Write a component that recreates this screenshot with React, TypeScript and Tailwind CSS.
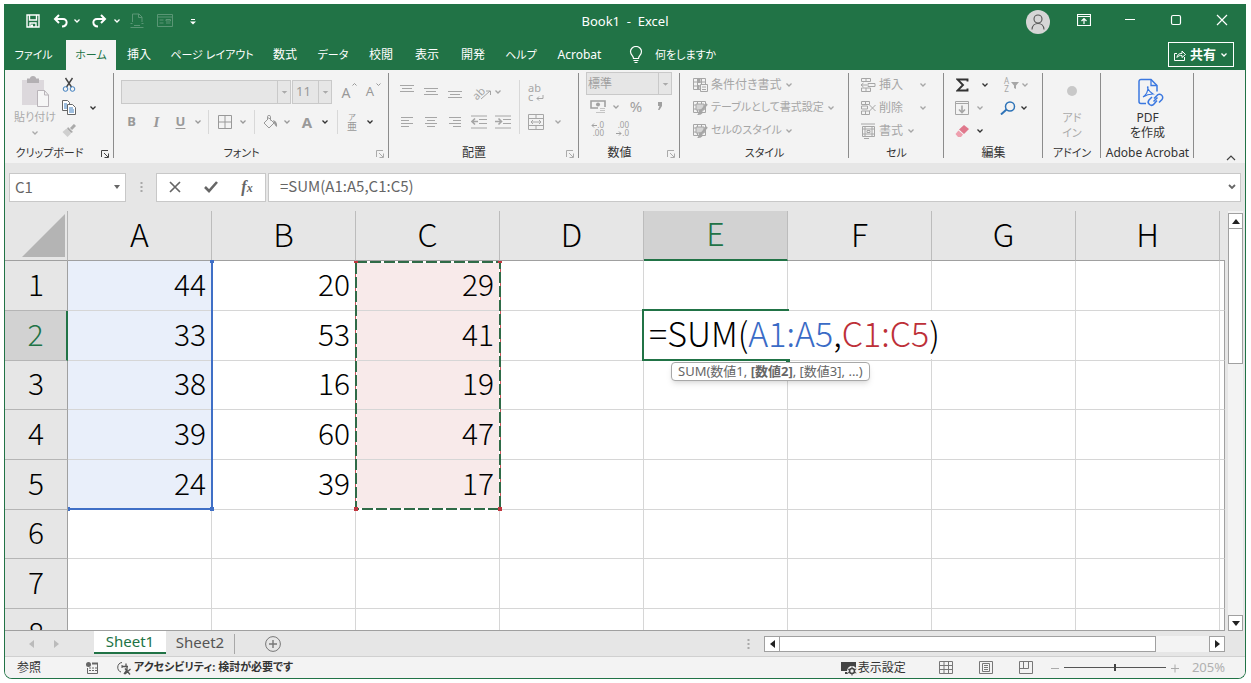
import React from 'react';

interface IconProps {
  w?: number;
  h?: number;
  className?: string;
  children: React.ReactNode;
}

const Icon: React.FC<IconProps> = ({ w = 16, h = 16, className = '', children }) => (
  <svg
    width={w}
    height={h}
    viewBox={`0 0 ${w} ${h}`}
    fill="none"
    stroke="currentColor"
    className={`shrink-0 ${className}`}
    aria-hidden="true"
  >
    {children}
  </svg>
);

const Chevron: React.FC<{ className?: string }> = ({ className = '' }) => (
  <Icon w={8} h={6} className={className}>
    <path d="M1.5 1.5 4 4l2.5-2.5" strokeWidth="1.3" />
  </Icon>
);

interface ToolProps {
  label: string;
  className?: string;
  children: React.ReactNode;
}

const Tool: React.FC<ToolProps> = ({ label, className = '', children }) => (
  <button type="button" aria-label={label} className={`flex shrink-0 items-center justify-center ${className}`}>
    {children}
  </button>
);

const Divider: React.FC<{ className?: string }> = ({ className = 'bg-[#d8d8d8]' }) => (
  <span className={`w-px shrink-0 ${className}`} />
);

interface GroupProps {
  title: string;
  width: string;
  titleSize?: string;
  launcher?: 'dark' | 'light';
  children: React.ReactNode;
}

const Group: React.FC<GroupProps> = ({ title, width, titleSize = 'text-[12px]', launcher, children }) => (
  <section className={`relative flex shrink-0 flex-col ${width}`}>
    <div className="h-[75px]">{children}</div>
    <h2 className={`text-center leading-5 whitespace-nowrap text-[#333] ${titleSize} ${launcher ? 'pr-5' : ''}`}>
      {title}
    </h2>
    {launcher && (
      <button
        type="button"
        aria-label={`${title}の設定`}
        className={`absolute right-1 bottom-1 ${launcher === 'dark' ? 'text-[#444]' : 'text-[#aaa]'}`}
      >
        <Icon w={10} h={10}>
          <path d="M1.5 8V1.5H8M4 4l4 4M8.5 4.5v4h-4" />
        </Icon>
      </button>
    )}
    <span className="absolute top-[3px] right-0 h-[85px] w-px bg-[#8c8c8c]" />
  </section>
);

const TitleBar: React.FC = () => (
  <header className="grid h-[36px] grid-cols-[1fr_auto_1fr] items-center bg-[#217346] text-white">
    <div className="flex items-center pb-[2px] pl-[18px]">
      <Tool label="上書き保存" className="w-5">
        <Icon w={14} h={14}>
          <path d="M1 1h12v12H1zM3.5 1v5h7V1M4 13V9h6v4" strokeWidth="1.4" />
          <path d="M5 10.500h2v2.500H5z" fill="currentColor" stroke="none" />
        </Icon>
      </Tool>
      <Tool label="元に戻す" className="ml-2 w-5">
        <Icon w={16} h={14}>
          <path d="M6 1 2 5l4 4M2.500 5H10c5 0 5 7-1 7.500" strokeWidth="2" />
        </Icon>
      </Tool>
      <Tool label="元に戻す履歴" className="w-3"><Chevron /></Tool>
      <Tool label="やり直し" className="ml-1 w-6">
        <Icon w={16} h={14}>
          <path d="m10 1 4 4-4 4M13.500 5H6C1 5 1 12 7 12.500" strokeWidth="2" />
        </Icon>
      </Tool>
      <Tool label="やり直し履歴" className="w-3"><Chevron /></Tool>
      <Tool label="ドキュメント" className="ml-[2px] w-6 text-[#5a9675]">
        <Icon w={14} h={16}>
          <path d="M2.500 9V1H9l3 3v5M8.500 1v3.500H12M.5 10.500h2M11.500 10.500h2M.5 14.500h13M4 12.500h6" />
        </Icon>
      </Tool>
      <Tool label="フォーム" className="ml-1 w-6 text-[#5a9675]">
        <Icon w={16} h={14}>
          <path d="M.5.5h15v12H.5zM.5 3h15M2.500 6h4M2.500 9h4M9 5.500h4.500v1.500H9zM9 9h4.500" />
        </Icon>
      </Tool>
      <Tool label="クイック アクセス ツール バーのカスタマイズ" className="ml-1 w-6">
        <Icon w={6} h={7}>
          <path d="M1 1.500h4" />
          <path d="M0 3.500h6L3 6.500z" fill="currentColor" stroke="none" />
        </Icon>
      </Tool>
    </div>
    <h1 className="text-[13px] whitespace-pre">Book1  -  Excel</h1>
    <div className="flex items-center justify-end">
      <button
        type="button"
        aria-label="アカウント"
        className="mr-[11px] flex h-6 w-6 items-center justify-center rounded-full bg-[#d6d6d6] text-[#555]"
      >
        <Icon w={16} h={18}>
          <circle cx="8" cy="6" r="4" strokeWidth="1.1" />
          <path d="M2 16.500C2.500 8.500 13.500 8.500 14 16.500" strokeWidth="1.1" />
        </Icon>
      </button>
      <Tool label="リボンの表示オプション" className="w-[46px] pb-1">
        <Icon w={14} h={12}>
          <path d="M.5.5h13v11H.5zM.5 2.500h13M7 10V5M4.500 7 7 4.500 9.500 7" strokeWidth="1.2" />
        </Icon>
      </Tool>
      <Tool label="最小化" className="w-[46px] pb-1">
        <Icon w={12} h={12}><path d="M1 5.500h10" strokeWidth="1.2" /></Icon>
      </Tool>
      <Tool label="最大化" className="w-[46px] pb-1">
        <Icon w={12} h={12}><rect x="1.500" y="1.500" width="9" height="9" rx="1.500" strokeWidth="1.200" /></Icon>
      </Tool>
      <Tool label="閉じる" className="w-[46px] pb-1">
        <Icon w={12} h={12}><path d="m1 1 10 10M11 1 1 11" strokeWidth="1.2" /></Icon>
      </Tool>
    </div>
  </header>
);

const menuTabs = [
  { label: '挿入', style: 'w-[46px] text-[12px]' },
  { label: 'ページ レイアウト', style: 'w-[100px] text-[11px]' },
  { label: '数式', style: 'w-[46px] text-[12px]' },
  { label: 'データ', style: 'w-[50px] text-[11px]' },
  { label: '校閲', style: 'w-[46px] text-[12px]' },
  { label: '表示', style: 'w-[46px] text-[12px]' },
  { label: '開発', style: 'w-[46px] text-[12px]' },
  { label: 'ヘルプ', style: 'w-[50px] text-[11px]' },
  { label: 'Acrobat', style: 'w-[67px] text-[12px]' },
];

const MenuTabs: React.FC = () => (
  <nav className="flex h-[30px] items-stretch bg-[#217346] text-[11px] whitespace-nowrap text-white">
    <button type="button" className="w-[61px] pr-1">ファイル</button>
    <button type="button" className="w-[50px] bg-[#f3f3f3] text-[#217346]">ホーム</button>
    {menuTabs.map(({ label, style }) => (
      <button key={label} type="button" className={style}>{label}</button>
    ))}
    <button type="button" className="ml-4 flex items-center gap-3">
      <Icon w={14} h={18}>
        <path d="M4.500 12.500c0-3-3-3.500-3-7a5.500 5 0 0 1 11 0c0 3.500-3 4-3 7zM4.500 14.500h5M5.500 16.500h3" strokeWidth="1.2" />
      </Icon>
      何をしますか
    </button>
    <button
      type="button"
      className="mt-[2px] mr-[11px] mb-[3px] ml-auto flex w-[66px] items-center justify-center gap-1 border border-white text-[13px] font-bold"
    >
      <Icon w={12} h={12}>
        <path d="M3 4.500H.5v7h10V8M3 8.500c0-3 2-4 5-4V2l3.500 3.500L8 8.500V6.500c-2 0-4 0-5 2z" />
      </Icon>
      共有
      <Chevron />
    </button>
  </nav>
);

const ClipboardGroup: React.FC = () => (
  <Group title="クリップボード" titleSize="text-[11px]" width="w-[109px]" launcher="dark">
    <div className="flex pl-2">
      <button type="button" className="flex w-[44px] flex-col items-center pt-[6px] text-[11px] whitespace-nowrap text-[#aaa]">
        <Icon w={30} h={32}>
          <path d="M2 4h22v25H2z" fill="#dcd8dc" stroke="none" />
          <path d="M7 2.500h3a3 2.500 0 0 1 6 0h3V7H7z" fill="#b3b0b3" stroke="none" />
          <path d="M17.500 14.500h7l4 4.500v11.500h-11zM24.500 14.500V19h4" fill="#f6f6f6" stroke="#b9b4b9" />
        </Icon>
        <span className="leading-[18px]">貼り付け</span>
        <Chevron className="mt-1" />
      </button>
      <div className="flex flex-col pt-[3px] pl-[2px]">
        <Tool label="切り取り" className="h-[23px] w-5 text-[#444]">
          <Icon w={14} h={16}>
            <path d="m3.500 1 6 9M10.500 1l-6 9" strokeWidth="1.400" />
            <circle cx="3.500" cy="12" r="2.300" stroke="#3f7fbf" />
            <circle cx="10.500" cy="12" r="2.300" stroke="#3f7fbf" />
          </Icon>
        </Tool>
        <div className="flex h-[23px]">
          <Tool label="コピー" className="w-5 text-[#666]">
            <Icon w={14} h={15}>
              <path d="M.5.5h5l2 2v8h-7z" fill="#fff" />
              <path d="M2 4h3M2 6h3M2 8h3" stroke="#3f7fbf" />
              <path d="M5.500 4.500h5l3 3v7h-8z" fill="#fff" />
              <path d="M7 8h4M7 10h5M7 12h5" stroke="#3f7fbf" />
            </Icon>
          </Tool>
          <Tool label="コピーのオプション" className="ml-[6px] w-4 text-[#333]"><Chevron /></Tool>
        </div>
        <Tool label="書式のコピー/貼り付け" className="h-[23px] w-5 text-[#aaa]">
          <Icon w={14} h={13}>
            <path d="m13 1-4 4" strokeWidth="3" />
            <path d="m6 3 5 5-2 1-4-4z" fill="currentColor" stroke="none" />
            <path d="m4.500 4.500 4.500 5L5.500 13 .5 8z" fill="#cfcfcf" stroke="none" />
          </Icon>
        </Tool>
      </div>
    </div>
  </Group>
);

const FontGroup: React.FC = () => (
  <Group title="フォント" titleSize="text-[11px]" width="w-[275px]" launcher="light">
    <div className="flex pt-[10px] pl-[7px] text-[#999]">
      <div className="relative">
        <select aria-label="フォント名" className="block h-6 w-[170px] appearance-none border border-[#c9c9c9] bg-[#e6e6e6]" />
        <Icon w={14} h={22} className="pointer-events-none absolute top-px right-0 border-l border-[#c9c9c9]">
          <path d="M4 10h6l-3 3z" fill="#aaa" stroke="none" />
        </Icon>
      </div>
      <div className="relative ml-px">
        <select aria-label="フォント サイズ" className="block h-6 w-10 appearance-none border border-[#c9c9c9] bg-[#e6e6e6] pl-[3px] text-[13px]">
          <option>11</option>
        </select>
        <Icon w={14} h={22} className="pointer-events-none absolute top-px right-0 border-l border-[#c9c9c9]">
          <path d="M4 10h6l-3 3z" fill="#aaa" stroke="none" />
        </Icon>
      </div>
      <button type="button" aria-label="フォント サイズの拡大" className="relative ml-[2px] w-6 text-[14px]">
        A
        <Icon w={5} h={3} className="absolute top-[3px] right-px"><path d="m.5 2.500 2-2 2 2" /></Icon>
      </button>
      <button type="button" aria-label="フォント サイズの縮小" className="relative w-6 text-[13px]">
        A
        <Icon w={5} h={3} className="absolute top-[3px] right-px"><path d="m.5.5 2 2 2-2" /></Icon>
      </button>
    </div>
    <div className="mt-[6px] flex h-6 items-center pl-[5px] text-[13px] text-[#999]">
      <button type="button" className="w-[25px] font-bold">B</button>
      <button type="button" className="w-[25px] font-['Liberation_Serif',serif] text-[15px] font-bold italic">I</button>
      <button type="button" className="w-[23px] font-bold underline underline-offset-2">U</button>
      <Tool label="下線の種類" className="w-3"><Chevron /></Tool>
      <Divider className="mx-1 h-6 bg-[#d8d8d8]" />
      <Tool label="罫線" className="w-6">
        <Icon w={14} h={14}><path d="M.5.5h13v13H.5zM7 .5v13M.5 7h13" /></Icon>
      </Tool>
      <Tool label="罫線の種類" className="w-3"><Chevron /></Tool>
      <Divider className="mx-[5px] h-6 bg-[#d8d8d8]" />
      <Tool label="塗りつぶしの色" className="w-5">
        <Icon w={15} h={14}>
          <path d="M5.500 3.500 1 8l5 5 5-5-5.500-5.500M4.500 5V1.500a1.500 1 0 0 1 3 0v4" />
          <path d="M10 5c3 1 4.500 3 4 7-1.500-1-2.500-2-3-4z" fill="currentColor" stroke="none" />
        </Icon>
      </Tool>
      <Tool label="塗りつぶしの色の選択" className="w-[14px]"><Chevron /></Tool>
      <button type="button" className="ml-[3px] w-5 text-[15px] font-bold">A</button>
      <Tool label="フォントの色の選択" className="w-4 text-[#333]"><Chevron /></Tool>
      <Divider className="mr-[2px] ml-1 h-6 bg-[#d8d8d8]" />
      <button type="button" aria-label="ふりがな" className="flex w-6 flex-col items-center">
        <span className="text-[8px] leading-[8px]">ア</span>
        <span className="text-[10px] leading-[10px]">亜</span>
      </button>
      <Tool label="ふりがなの設定" className="w-3 text-[#333]"><Chevron /></Tool>
    </div>
  </Group>
);

const AlignmentGroup: React.FC = () => (
  <Group title="配置" width="w-[190px]" launcher="light">
    <div className="flex pt-[10px] pl-[6px] text-[#a6a6a6]">
      <div className="flex w-[122px] flex-col gap-[6px]">
        <div className="flex h-6">
          <Tool label="上揃え" className="w-6">
            <Icon w={14} h={20}><path d="M0 3.500h14M2 6.500h10M0 9.500h14" /></Icon>
          </Tool>
          <Tool label="上下中央揃え" className="w-6">
            <Icon w={14} h={20}><path d="M0 6.500h14M2 9.500h10M0 12.500h14" /></Icon>
          </Tool>
          <Tool label="下揃え" className="w-6">
            <Icon w={14} h={20}><path d="M0 9.500h14M2 12.500h10M0 15.500h14" /></Icon>
          </Tool>
          <button type="button" aria-label="方向" className="relative ml-px w-6 text-[11px]">
            <span className="block -rotate-45 pr-1 leading-[22px]">ab</span>
            <Icon w={12} h={12} className="absolute right-0 bottom-1"><path d="m1 11 9-8M6 3h4.500v4" /></Icon>
          </button>
          <Tool label="方向の選択" className="w-3"><Chevron /></Tool>
        </div>
        <div className="flex h-6">
          <Tool label="左揃え" className="w-6">
            <Icon w={12} h={12}><path d="M0 1.500h12M0 4.500h8M0 7.500h12M0 10.500h8" /></Icon>
          </Tool>
          <Tool label="中央揃え" className="w-6">
            <Icon w={12} h={12}><path d="M0 1.500h12M2 4.500h8M0 7.500h12M2 10.500h8" /></Icon>
          </Tool>
          <Tool label="右揃え" className="w-6">
            <Icon w={12} h={12}><path d="M0 1.500h12M4 4.500h8M0 7.500h12M4 10.500h8" /></Icon>
          </Tool>
          <Tool label="インデントを減らす" className="w-6">
            <Icon w={16} h={14}>
              <path d="M0 1h16M8 4.500h8M8 8.500h8M0 13h16" />
              <path d="M1.500 6.500H7M4 3.500l-3 3 3 3" strokeWidth="1.600" />
            </Icon>
          </Tool>
          <Tool label="インデントを増やす" className="w-6">
            <Icon w={16} h={14}>
              <path d="M0 1h16M8 4.500h8M8 8.500h8M0 13h16" />
              <path d="M0 6.500h6M3.500 3.500l3 3-3 3" strokeWidth="1.600" />
            </Icon>
          </Tool>
        </div>
      </div>
      <Divider className="ml-[2px] h-[54px] bg-[#d8d8d8]" />
      <div className="flex flex-col gap-[6px] pl-1">
        <button type="button" aria-label="折り返して全体を表示する" className="relative h-6 w-6 text-left text-[11px] leading-[9px]">
          <span className="block pl-1">ab</span>
          <span className="block pl-1">c</span>
          <Icon w={8} h={6} className="absolute right-1 bottom-[3px]"><path d="M7 0v3.500H1M3 1.500l-2 2 2 2" /></Icon>
        </button>
        <div className="flex h-6">
          <Tool label="セルを結合して中央揃え" className="w-6">
            <Icon w={16} h={16}>
              <path d="M.5.5h15v15H.5zM.5 4.500h15M.5 11.500h15M8 .5v4M8 11.500v4M3 8h10M5 6 3 8l2 2M11 6l2 2-2 2" />
            </Icon>
          </Tool>
          <Tool label="結合の選択" className="ml-[2px] w-4"><Chevron /></Tool>
        </div>
      </div>
    </div>
  </Group>
);

const NumberGroup: React.FC = () => (
  <Group title="数値" width="w-[101px]" launcher="light">
    <div className="flex flex-col pt-[2px] pl-[7px] text-[#a0a0a0]">
      <div className="relative w-[86px]">
        <select aria-label="数値の書式" className="block h-[23px] w-full appearance-none border border-[#c9c9c9] bg-[#e6e6e6] pl-[1px] text-[12px]">
          <option>標準</option>
        </select>
        <Icon w={14} h={21} className="pointer-events-none absolute top-px right-0 border-l border-[#c9c9c9]">
          <path d="M4 10h6l-3 3z" fill="#aaa" stroke="none" />
        </Icon>
      </div>
      <div className="flex h-[23px] items-center">
        <Tool label="通貨表示形式" className="w-6">
          <Icon w={16} h={14}>
            <path d="M1 1h14v7H1z" strokeWidth="1.600" />
            <circle cx="8" cy="4.500" r="2" fill="currentColor" stroke="none" />
            <path d="M8 7h8v7H8z" fill="#f3f3f3" stroke="none" />
            <path d="M10 8.500h5M10 10.500h5M6 12.500h9" stroke="#c4c4c4" />
          </Icon>
        </Tool>
        <Tool label="通貨の選択" className="w-3"><Chevron /></Tool>
        <button type="button" className="ml-[2px] w-6 text-[15px]">%</button>
        <Tool label="桁区切りスタイル" className="w-6">
          <Icon w={6} h={9}><path d="M1 0h4v4L2.500 8H1l1.500-4H1z" fill="currentColor" stroke="none" /></Icon>
        </Tool>
      </div>
      <div className="flex h-[22px] items-center text-[8px] leading-[8px]">
        <button type="button" aria-label="小数点以下の表示桁数を増やす" className="flex w-6 flex-col items-end pr-[6px]">
          <span className="flex items-center">
            <Icon w={6} h={5}><path d="M6 2.500H1M3 .5l-2 2 2 2" /></Icon>.0
          </span>
          <span>.00</span>
        </button>
        <button type="button" aria-label="小数点以下の表示桁数を減らす" className="flex w-6 flex-col items-end pr-[5px]">
          <span>.00</span>
          <span className="flex items-center">
            <Icon w={6} h={5}><path d="M0 2.500h5M3 .5l2 2-2 2" /></Icon>.0
          </span>
        </button>
      </div>
    </div>
  </Group>
);

const TableIcon: React.FC<{ kind: string }> = ({ kind }) => (
  <Icon w={16} h={16}>
    <path d="M1.500 1.500h12v11h-12zM1.500 5h12M1.500 9h12M5.500 1.500v11M9.500 1.500v11" />
    {kind === 'rule' ? (
      <>
        <path d="M5.500 1.500h3V6h-3zM5.500 8h2v4h-2z" fill="currentColor" stroke="none" />
        <path d="M8.500 7.500h7v7h-7zM10 10h4M10 12.500h4" fill="#f3f3f3" />
      </>
    ) : (
      <>
        <path d="M4 4h8v6H4z" fill="#d4d4d4" />
        <path d="m15 4-6 7" strokeWidth="2" />
        <path d="m8 9 3 3c-1 3-4 3-6 3 2-1 1-4 3-6z" fill="currentColor" stroke="none" />
      </>
    )}
  </Icon>
);

const styleItems = [
  { label: '条件付き書式', kind: 'rule', size: 'text-[12px]' },
  { label: 'テーブルとして書式設定', kind: 'table', size: 'text-[11px]' },
  { label: 'セルのスタイル', kind: 'style', size: 'text-[11px]' },
];

const StyleGroup: React.FC = () => (
  <Group title="スタイル" titleSize="text-[11px]" width="w-[169px]">
    <div className="flex flex-col pt-[3px] pl-3 whitespace-nowrap text-[#a6a6a6]">
      {styleItems.map(({ label, kind, size }) => (
        <button key={label} type="button" className={`flex h-[23px] items-center gap-[3px] ${size}`}>
          <TableIcon kind={kind} />
          {label}
          <Chevron />
        </button>
      ))}
    </div>
  </Group>
);

const cellItems = [
  { label: '挿入', gap: 'ml-4', d: 'M1.500 1.500h9v3h-9zM6 1.500v3M1.500 11h9v3.500h-9zM6 11v3.500M8 6.500h7v3H8zM7 8H1M3.500 6 1 8l2.500 2' },
  { label: '削除', gap: 'ml-4', d: 'M1.500 1.500h8v3h-8zM5.500 1.500v3M1.500 6h6v3h-6zM1.500 11h8v3.500h-8zM5.500 11v3.500M9.500 5l6 6M15.500 5l-6 6' },
  { label: '書式', gap: 'ml-1', d: 'M1 1h14M2.500 3.500h12v10h-12zM5 3.500v10M12 3.500v10M2.500 6h12M2.500 11h12M7 7.500h3v2H7zM4 15.500h5' },
];

const CellGroup: React.FC = () => (
  <Group title="セル" titleSize="text-[11px]" width="w-[95px]">
    <div className="flex flex-col pt-[3px] pl-[11px] text-[12px] whitespace-nowrap text-[#a6a6a6]">
      {cellItems.map(({ label, gap, d }) => (
        <button key={label} type="button" className="flex h-[23px] items-center">
          <Icon w={16} h={16}><path d={d} /></Icon>
          <span className="ml-[3px]">{label}</span>
          <Chevron className={gap} />
        </button>
      ))}
    </div>
  </Group>
);

const EditGroup: React.FC = () => (
  <Group title="編集" width="w-[99px]">
    <div className="flex flex-col pt-[3px] pl-[6px] text-[#333]">
      <div className="flex h-[23px] items-center">
        <Tool label="オート SUM" className="w-6">
          <Icon w={13} h={14}><path d="M11.500 3.500V1.500H1.500L7 7l-5.500 5.500h10v-2" strokeWidth="1.900" /></Icon>
        </Tool>
        <Tool label="集計の選択" className="ml-[5px] w-3"><Chevron /></Tool>
        <button type="button" aria-label="並べ替えとフィルター" className="ml-[9px] flex w-7 items-center gap-[2px] pl-1 text-[#a6a6a6]">
          <span className="text-[8px] leading-[8px]">A<br />Z</span>
          <Icon w={8} h={8}><path d="M0 1h8L5 4.500V8L3 7V4.500z" fill="currentColor" stroke="none" /></Icon>
          <Chevron />
        </button>
      </div>
      <div className="flex h-[23px] items-center">
        <Tool label="フィル" className="w-6 text-[#a6a6a6]">
          <Icon w={14} h={14}>
            <path d="M.5.5h13v13H.5zM.5 2.500h13" />
            <path d="M7 4.500v7M4 8.500l3 3 3-3" strokeWidth="1.600" />
          </Icon>
        </Tool>
        <Tool label="フィルの選択" className="w-3 text-[#a6a6a6]"><Chevron /></Tool>
        <Tool label="検索と選択" className="ml-[10px] w-6 text-[#2f74b8]">
          <Icon w={16} h={14}>
            <circle cx="10" cy="5.500" r="4.500" strokeWidth="1.500" />
            <path d="m6.500 8.500-5.500 5" strokeWidth="2" />
          </Icon>
        </Tool>
        <Tool label="検索の選択" className="w-2"><Chevron /></Tool>
      </div>
      <div className="flex h-[23px] items-center">
        <Tool label="クリア" className="w-6">
          <Icon w={14} h={12}>
            <path d="m9 0 5 4-5 5-5-4.500z" fill="#e0788c" stroke="none" />
            <path d="m3.500 5.500 4.500 4L6 12H3L.5 9z" fill="#ee9fae" stroke="none" />
          </Icon>
        </Tool>
        <Tool label="クリアの選択" className="w-3"><Chevron /></Tool>
      </div>
    </div>
  </Group>
);

const Ribbon: React.FC = () => (
  <div className="flex h-[93px] overflow-hidden bg-[#f3f3f3]">
    <ClipboardGroup />
    <FontGroup />
    <AlignmentGroup />
    <NumberGroup />
    <StyleGroup />
    <CellGroup />
    <EditGroup />
    <Group title="アドイン" titleSize="text-[11px]" width="w-[58px]">
      <button type="button" className="flex w-full flex-col items-center pt-4 text-[11px] leading-[15px] text-[#aaa]">
        <span className="mb-[14px] h-[10px] w-[10px] rounded-full bg-[#c8c8c8]" />
        アド<br />イン
      </button>
    </Group>
    <Group title="Adobe Acrobat" width="w-[93px]">
      <button type="button" className="flex w-full flex-col items-center pt-2 text-[12px] leading-[15px] text-[#333]">
        <Icon w={26} h={30} className="mb-[2px] ml-[6px] text-[#3b78e0]">
          <path d="M8 25.500H3a2 2 0 0 1-2-2V3.500a2 2 0 0 1 2-2h10l6 6v6" strokeWidth="1.500" />
          <path d="M13 1.500v6h6" strokeWidth="1.300" />
          <path d="M5 19c3-2 5-6 5-10-1-1-1 3 5 7-3 0-7 1-10 3z" strokeWidth="1.200" />
          <path d="M16 20.500l3-3a3 3 0 0 1 5 4l-3 3M19 22.500l-3 3.500a3 3 0 0 1-5-4l3-3M15.500 23.500l4-4" strokeWidth="1.500" />
        </Icon>
        <span>PDF</span>
        <span>を作成</span>
      </button>
    </Group>
    <Tool label="リボンを折りたたむ" className="mt-auto mr-[9px] ml-auto h-3 text-[#444]">
      <Icon w={10} h={7}><path d="m1 6 4-4 4 4" strokeWidth="1.200" /></Icon>
    </Tool>
  </div>
);

const FormulaBar: React.FC = () => (
  <div className="flex h-12 items-center bg-[#e6e6e6] px-1 text-[#666]">
    <div className="flex h-[29px] w-[117px] items-center border border-[#c8c8c8] bg-white pl-[5px]">
      <input
        aria-label="名前ボックス"
        defaultValue="C1"
        className="min-w-0 flex-1 font-['Noto_Sans_CJK_JP',sans-serif] text-[15px] leading-5 outline-none"
      />
      <Tool label="名前の一覧" className="w-4">
        <Icon w={6} h={4}><path d="M0 0h6L3 4z" fill="currentColor" stroke="none" /></Icon>
      </Tool>
    </div>
    <Icon w={3} h={12} className="mx-[14px]">
      <path d="M1.500 1v2M1.500 5v2M1.500 9v2" strokeWidth="2" stroke="#a8a8a8" />
    </Icon>
    <div className="-ml-px flex h-[29px] w-[110px] items-center justify-around border border-[#c8c8c8] bg-white">
      <Tool label="キャンセル" className="w-8">
        <Icon w={12} h={12}><path d="m1 1 10 10M11 1 1 11" strokeWidth="1.700" /></Icon>
      </Tool>
      <Tool label="入力" className="w-8">
        <Icon w={14} h={12}><path d="m1 6 4 4 8-9" strokeWidth="2.600" /></Icon>
      </Tool>
      <button type="button" aria-label="関数の挿入" className="w-8 font-['Liberation_Serif',serif] text-[16px] font-bold italic">
        f<span className="text-[12px]">x</span>
      </button>
    </div>
    <div className="ml-[2px] flex h-[29px] min-w-0 flex-1 items-center border border-[#c8c8c8] bg-white pl-[11px]">
      <input
        aria-label="数式バー"
        defaultValue="=SUM(A1:A5,C1:C5)"
        className="min-w-0 flex-1 pb-[3px] font-['Noto_Sans_CJK_JP',sans-serif] text-[15px] leading-5 outline-none"
      />
      <Tool label="数式バーの展開" className="w-4">
        <Icon w={8} h={6}><path d="m1 1 3 3 3-3" strokeWidth="1.800" /></Icon>
      </Tool>
    </div>
  </div>
);

const columns = ['A', 'B', 'C', 'D', 'E', 'F', 'G', 'H'];
const rows: (number | null)[][] = [
  [44, 20, 29],
  [33, 53, 41],
  [38, 16, 19],
  [39, 60, 47],
  [24, 39, 17],
  [],
  [],
  [],
];

const cellFill = (column: string, row: number) => {
  if (row > 5) return 'bg-white';
  if (column === 'A') return 'bg-[#e9effa]';
  if (column === 'C') return 'bg-[#f8eaea]';
  return 'bg-white';
};

const EditingCell: React.FC = () => (
  <>
    <span className="absolute -top-[2px] -left-[2px] h-[52px] w-[147px] border-2 border-r-0 border-[#217346]" />
    <span className="absolute top-0 left-0 z-10 h-[48px] bg-white pl-[5px] text-[34px] leading-[43px] whitespace-nowrap">
      =SUM(<span className="text-[#3a6bc6]">A1:A5</span>,<span className="text-[#bd3038]">C1:C5</span>)
    </span>
    <span className="absolute top-[48px] left-[142px] z-10 h-1 w-1 bg-[#217346]" />
    <span className="absolute top-[51px] left-[27px] z-10 rounded-[4px] border border-[#a8a8a8] bg-white px-[6px] font-['Noto_Sans','Noto_Sans_CJK_JP',sans-serif] text-[13px] leading-[17px] font-normal whitespace-nowrap text-[#666] shadow-md">
      SUM(数値1, <b>[数値2]</b>, [数値3], ...)
    </span>
  </>
);

const Sheet: React.FC = () => (
  <div className="flex min-h-0 flex-1 bg-[#e6e6e6]">
    <div className="relative min-w-0 flex-1 overflow-hidden border-b border-[#a0a0a0] font-['Noto_Sans_CJK_JP',sans-serif] font-light text-black">
      <table className="w-full table-fixed border-separate border-spacing-0">
        <colgroup>
          <col className="w-[63px]" />
          {columns.map((column) => <col key={column} className="w-[144px]" />)}
          <col />
        </colgroup>
        <thead>
          <tr className="h-[50px] text-[32px] leading-[42px]">
            <th className="border-r border-b border-r-[#b5b5b5] border-b-[#a0a0a0] p-0">
              <button type="button" aria-label="すべて選択" className="ml-auto block pr-[2px]">
                <Icon w={43} h={43}><path d="M43 0v43H0z" fill="#b4b4b4" stroke="none" /></Icon>
              </button>
            </th>
            {columns.map((column) => (
              <th
                key={column}
                scope="col"
                className={`border-r border-r-[#bcbcbc] px-0 pt-0 pb-[6px] font-light ${
                  column === 'E'
                    ? 'border-b-2 border-b-[#217346] bg-[#d2d2d2] text-[#217346]'
                    : 'border-b border-b-[#a0a0a0]'
                }`}
              >
                {column}
              </th>
            ))}
            <th className="border-b border-[#a0a0a0] p-0" />
          </tr>
        </thead>
        <tbody className="text-[30px] leading-[42px]">
          {rows.map((values, index) => (
            <tr key={index} className="h-[50px] nth-[3n]:h-[49px]">
              <th
                scope="row"
                className={`border-r border-b border-b-[#b5b5b5] px-0 pt-0 pb-[6px] font-light ${
                  index === 1 ? 'border-r-2 border-r-[#217346] bg-[#d2d2d2] text-[#217346]' : 'border-r-[#a0a0a0]'
                }`}
              >
                {index + 1}
              </th>
              {columns.map((column, c) => (
                <td
                  key={column}
                  className={`relative border-r border-b border-[#d6d6d6] pt-0 pr-[5px] pb-[6px] pl-0 text-right ${cellFill(column, index + 1)}`}
                >
                  {values[c]}
                  {column === 'E' && index === 1 && <EditingCell />}
                </td>
              ))}
              <td className="border-r border-b border-[#d6d6d6] border-r-[#a0a0a0] bg-white p-0" />
            </tr>
          ))}
        </tbody>
      </table>
      <div className="absolute top-[50px] left-[63px] h-[249px] w-[145px] border-r-2 border-b-2 border-[#3f6fc6]">
        <span className="absolute -top-px -right-[3px] h-[3px] w-1 bg-[#3f6fc6]" />
        <span className="absolute -right-[3px] -bottom-[3px] h-1 w-1 bg-[#3f6fc6]" />
        <span className="absolute -bottom-[3px] left-0 h-1 w-[2px] bg-[#3f6fc6]" />
      </div>
      {/* marching ants around the referenced range */}
      <Icon w={148} h={252} className="absolute top-[49px] left-[349px]">
        <path d="M1.500 1v249M146.500 1v249" stroke="#c9555b" />
        <path d="M2 2h144v247H2z" stroke="#fff" strokeWidth="2" />
        <path d="M1.500 1v249M146.500 1v249" stroke="#c9555b" />
        <path d="M2 2h144v247H2z" stroke="#2f6b47" strokeWidth="2" strokeDasharray="11 3" />
        <path d="M0 1h4v2H0zM144 1h4v2h-4zM0 247h4v4H0zM144 247h4v4h-4z" fill="#c0363e" stroke="none" />
      </Icon>
    </div>
    <div className="mr-[2px] ml-[3px] flex w-[15px] shrink-0 flex-col bg-[#f3f3f3]">
      <Tool label="上へスクロール" className="mt-[2px] h-4 border border-[#a0a0a0] bg-white">
        <Icon w={8} h={5}><path d="M0 5h8L4 0z" fill="#222" stroke="none" /></Icon>
      </Tool>
      <div className="h-[135px] border border-t-0 border-[#a0a0a0] bg-white" />
      <Tool label="下へスクロール" className="mt-auto h-4 border border-[#a0a0a0] bg-white">
        <Icon w={8} h={5}><path d="M0 0h8L4 5z" fill="#222" stroke="none" /></Icon>
      </Tool>
    </div>
  </div>
);

const SheetTabs: React.FC = () => (
  <div className="flex h-[25px] shrink-0 items-center bg-[#e6e6e6] text-[15px] text-[#555]">
    <div className="flex w-[89px] items-center gap-[1px] pl-[14px] text-[#bbb]">
      <Tool label="前のシート" className="w-6">
        <Icon w={5} h={8}><path d="M5 0v8L0 4z" fill="currentColor" stroke="none" /></Icon>
      </Tool>
      <Tool label="次のシート" className="w-6">
        <Icon w={5} h={8}><path d="M0 0v8l5-4z" fill="currentColor" stroke="none" /></Icon>
      </Tool>
    </div>
    <button type="button" className="mb-auto h-[23px] w-[72px] border-b-2 border-[#217346] bg-white leading-[21px] text-[#217346]">
      Sheet1
    </button>
    <button type="button" className="mb-auto h-[23px] w-[68px] leading-[23px]">Sheet2</button>
    <Divider className="h-5 bg-[#a8a8a8]" />
    <Tool label="新しいシート" className="ml-[30px] text-[#777]">
      <Icon w={16} h={16}>
        <circle cx="8" cy="8" r="7.400" />
        <path d="M8 4v8M4 8h8" strokeWidth="1.400" />
      </Icon>
    </Tool>
    <Icon w={3} h={12} className="mr-[14px] ml-auto">
      <path d="M1.500 1v2M1.500 5v2M1.500 9v2" strokeWidth="2" stroke="#a8a8a8" />
    </Icon>
    <div className="mr-5 flex h-4 w-[461px] bg-[#f3f3f3]">
      <Tool label="左へスクロール" className="w-4 border border-[#a0a0a0] bg-white">
        <Icon w={5} h={8}><path d="M5 0v8L0 4z" fill="#222" stroke="none" /></Icon>
      </Tool>
      <div className="w-[376px] border border-l-0 border-[#a0a0a0] bg-white" />
      <Tool label="右へスクロール" className="ml-auto w-4 border border-[#a0a0a0] bg-white">
        <Icon w={5} h={8}><path d="M0 0v8l5-4z" fill="#222" stroke="none" /></Icon>
      </Tool>
    </div>
  </div>
);

const StatusBar: React.FC = () => (
  <footer className="flex h-[22px] shrink-0 items-center border-t border-[#d0d0d0] bg-[#f3f3f3] text-[12px] whitespace-nowrap text-[#333]">
    <span className="pl-3">参照</span>
    <Tool label="マクロの記録" className="ml-[43px] w-4 text-[#666]">
      <Icon w={12} h={12}>
        <circle cx="2.500" cy="2.500" r="2.500" fill="currentColor" stroke="none" />
        <path d="M6 1.500h6" strokeWidth="2" />
        <path d="M1.500 6v5.500h10V2M3 6h2M6 6h2M9 6h2M3 8.500h2M6 8.500h2M9 8.500h2" />
      </Icon>
    </Tool>
    <button type="button" className="ml-4 flex items-center gap-[2px] text-[11px] font-bold">
      <Icon w={16} h={14} className="text-[#555]">
        <path d="M6 1.500C.5 2 .5 10 5 11M6 4v3" />
        <path d="M6 5.500h6M10 2.500v3M8 13l3-4V5.500M9 7.500l5 6M14.500 8 9 13" strokeWidth="1.300" />
      </Icon>
      アクセシビリティ: 検討が必要です
    </button>
    <button type="button" className="ml-auto flex items-center gap-px">
      <Icon w={17} h={16} className="text-[#444]">
        <path d="M1 2h15v9H1zM5 12h4v2H5z" fill="currentColor" stroke="none" />
        <circle cx="12" cy="11" r="5" fill="#f3f3f3" stroke="none" />
        <circle cx="12" cy="11" r="2.500" strokeWidth="1.600" />
        <path d="M12 6.500v2M12 13.500v2M7.800 9l1.800.8M14.500 12.300l1.800.7M7.800 13l1.800-.8M14.500 9.700l1.800-.7" />
      </Icon>
      表示設定
    </button>
    <div className="ml-[33px] flex gap-[26px] text-[#777]">
      <Tool label="標準">
        <Icon w={14} h={14}><path d="M.5.5h13v12H.5zM.5 4.500h13M.5 8.500h13M5 .5v12M9.500.5v12" /></Icon>
      </Tool>
      <Tool label="ページ レイアウト表示">
        <Icon w={14} h={14}><path d="M.5.5h13v12H.5zM3.500 2.500h7v8h-7zM5 4.500h4M5 6.500h4M5 8.500h4" /></Icon>
      </Tool>
      <Tool label="改ページ プレビュー">
        <Icon w={14} h={14}><path d="M.5.5h13v12H.5zM4.500.5v7M9.500.5v7M.5 7.500h9" /></Icon>
      </Tool>
    </div>
    <button type="button" aria-label="縮小" className="ml-[17px] text-[#aaa]">
      <Icon w={10} h={10}><path d="M1 5.500h8" /></Icon>
    </button>
    <div className="mx-1 flex h-4 w-[102px] items-center">
      <input
        type="range"
        aria-label="ズーム"
        defaultValue={50}
        className="h-px w-full appearance-none bg-[#555] [&::-webkit-slider-thumb]:h-[7px] [&::-webkit-slider-thumb]:w-[2px] [&::-webkit-slider-thumb]:appearance-none [&::-webkit-slider-thumb]:bg-[#444]"
      />
    </div>
    <button type="button" aria-label="拡大" className="text-[#aaa]">
      <Icon w={10} h={10}><path d="M1 5.500h8M5 1.500v8" /></Icon>
    </button>
    <span className="mr-5 ml-3 text-[13px] text-[#b0b0b0]">205%</span>
  </footer>
);

const App: React.FC = () => (
  <div className="h-screen bg-white pt-1 pr-[5px] pb-1 pl-1 font-['Noto_Sans','Noto_Sans_CJK_JP',sans-serif] [font-feature-settings:'palt']">
    <main className="flex h-full flex-col overflow-hidden rounded-b-lg border border-t-0 border-[#217346] bg-white">
      <TitleBar />
      <MenuTabs />
      <Ribbon />
      <FormulaBar />
      <Sheet />
      <SheetTabs />
      <StatusBar />
    </main>
  </div>
);

export default App;
